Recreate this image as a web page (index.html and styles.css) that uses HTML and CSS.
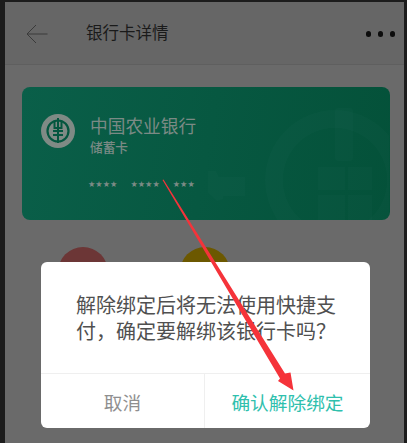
FILE: index.html
```
<!DOCTYPE html>
<html lang="zh">
<head>
<meta charset="utf-8">
<title>银行卡详情</title>
<link rel="stylesheet" href="styles.css">
</head>
<body>
<div class="frame">
  <main class="page">
    <header class="topbar">
      <svg class="back" width="22" height="20" viewBox="0 0 22 20"><path d="M21.500 10H1M10 1 1 10l9 9" fill="none" stroke="#3a3a3a" stroke-width="1"/></svg>
      <h1 class="title">银行卡详情</h1>
      <div class="dots"><i></i><i></i><i></i></div>
    </header>
    <section class="card">
      <svg class="watermark" width="367" height="133" viewBox="0 0 367 133">
        <g fill="#fff" fill-opacity=".016">
          <path fill-rule="evenodd" d="M313 23a70 70 0 0 0 0 140 70 70 0 0 0 0-140Zm0 18a52 52 0 0 1 0 104 52 52 0 0 1 0-104Z"/>
          <path d="M186 84h8l3 6h26v19h-22v3l-6 2-9-8Z"/>
          <rect x="313" y="21" width="18" height="53" rx="3"/>
          <rect x="296" y="80" width="27" height="23"/>
          <rect x="326" y="80" width="24" height="23"/>
          <rect x="296" y="108" width="27" height="25"/>
          <rect x="326" y="108" width="24" height="25"/>
        </g>
      </svg>
      <div class="card-main">
        <svg class="logo" width="34" height="34" viewBox="0 0 34 34">
          <circle cx="17" cy="17" r="17" fill="#7f8a85"/>
          <circle cx="17" cy="17" r="10.500" fill="none" stroke="#04563f" stroke-width="2.200"/>
          <path d="M13.500 7v7h7V7M17 4v25M12 17h10M12 21h10" fill="none" stroke="#04563f" stroke-width="2"/>
        </svg>
        <div class="bank">
          <div class="bank-name">中国农业银行</div>
          <div class="bank-type">储蓄卡</div>
        </div>
      </div>
      <div class="number"><span>★★★★</span><span>★★★★</span><span>★★★</span></div>
    </section>
    <div class="actions">
      <div class="action action-red"></div>
      <div class="action action-yellow"></div>
    </div>
  </main>
  <div class="dialog">
    <p class="message">解除绑定后将无法使用快捷支付，确定要解绑该银行卡吗？</p>
    <div class="buttons">
      <div class="btn btn-cancel">取消</div>
      <div class="btn btn-ok">确认解除绑定</div>
    </div>
  </div>
  <svg class="arrow" width="407" height="443" viewBox="0 0 407 443"><path d="M162.500 180 163.500 179.500 285 373.500 290.500 372.500 293.500 390.500 278 381 280 378.500Z" fill="#f5333a"/></svg>
</div>
</body>
</html>
```
FILE: styles.css
```
* { box-sizing: border-box; }
html, body { margin: 0; padding: 0; }
body {
  width: 407px;
  height: 443px;
  overflow: hidden;
  background: #1c1c1c;
  font-family: "Noto Sans CJK SC", "Noto Sans", sans-serif;
}
.frame {
  position: relative;
  width: 407px;
  height: 443px;
  padding: 2px 3px 0 5px;
  overflow: hidden;
}
.page {
  height: 441px;
  background: #6a6a6a;
  display: flex;
  flex-direction: column;
}
.topbar {
  height: 63px;
  flex: none;
  background: #666;
  border-bottom: 1px solid #5f5f5f;
  display: flex;
  align-items: center;
  padding: 0 9px 0 21px;
}
.back { flex: none; margin-top: 1px; }
.title {
  margin: 0 0 3px 38px;
  font-size: 16.500px;
  font-weight: 400;
  color: #1a1a1a;
  flex: 1;
}
.dots { display: flex; gap: 6.500px; margin-top: 2px; }
.dots i { width: 5.500px; height: 5.500px; border-radius: 50%; background: #0c0c0c; }
.card {
  position: relative;
  flex: none;
  margin: 22px 14px 0 17px;
  height: 133px;
  border-radius: 8px;
  background: linear-gradient(100deg, #0a5f49, #045139);
  overflow: hidden;
  padding: 27px 0 0 19px;
}
.watermark { position: absolute; left: 0; top: 0; }
.card-main { position: relative; display: flex; gap: 15px; }
.logo { flex: none; }
.bank { margin-top: -1px; }
.bank-name { font-size: 17.700px; line-height: 24px; color: #7b8a85; }
.bank-type { font-size: 12.700px; font-weight: 500; line-height: 18px; color: #7b8a85; margin-top: 1px; }
.number {
  position: relative;
  display: flex;
  gap: 13px;
  margin: 20px 0 0 47px;
  font-family: "DejaVu Sans", sans-serif;
  font-size: 8.200px;
  line-height: 17px;
  color: #7b8a85;
}
.actions { display: flex; gap: 72px; margin: 27px 0 0 53px; }
.action { width: 50px; height: 50px; border-radius: 50%; }
.action-red { background: #6c3636; }
.action-yellow { background: #6c5800; }
.dialog {
  position: absolute;
  left: 41px;
  top: 262px;
  width: 329px;
  height: 166px;
  background: #fff;
  border-radius: 6px;
  display: flex;
  flex-direction: column;
}
.message {
  margin: 0;
  padding: 30px 34px 0 35px;
  height: 112px;
  font-size: 20px;
  line-height: 26px;
  color: #505050;
  border-bottom: 1px solid #efefef;
}
.buttons { flex: 1; display: flex; }
.btn { display: flex; align-items: center; justify-content: center; font-size: 18.700px; }
.btn-cancel { width: 164px; color: #8f8f8f; border-right: 1px solid #efefef; }
.btn-ok { flex: 1; color: #2fc0ad; }
.arrow { position: absolute; left: 0; top: 0; pointer-events: none; }
```
